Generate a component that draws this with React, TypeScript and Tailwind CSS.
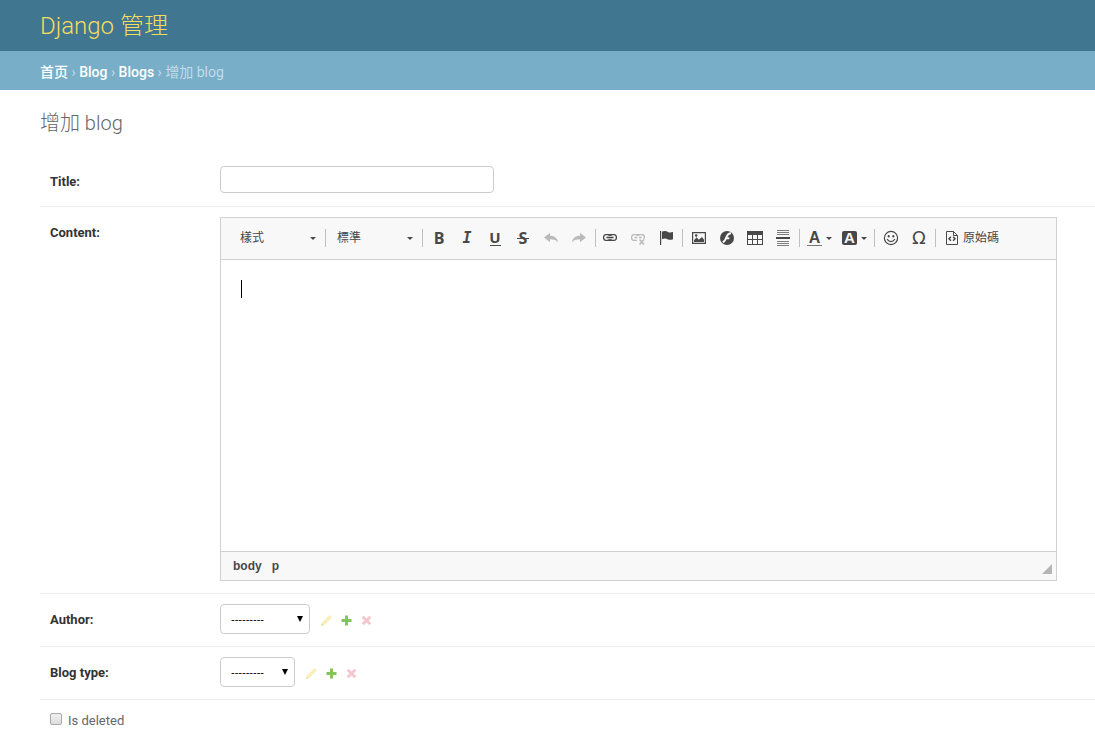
import type { ReactNode } from "react";

const sans = "font-[Roboto,'Noto_Sans_CJK_SC',sans-serif]";
const toolbarFont = "font-['Liberation_Sans','Noto_Sans_CJK_TC',sans-serif]";

function Arrow() {
  return (
    <svg viewBox="0 0 6 3" className="pointer-events-none h-[3px] w-1.5 shrink-0 fill-[#484848]">
      <path d="M0 0h6L3 3z" />
    </svg>
  );
}

function Combo({ label, text }: { label: string; text: string }) {
  return (
    <div className="relative flex w-24 items-center">
      <select
        aria-label={label}
        className={`h-7 w-full appearance-none bg-transparent pl-[11px] text-xs text-[#484848] outline-none ${toolbarFont}`}
      >
        <option>{text}</option>
      </select>
      <span className="pointer-events-none absolute right-[9px] flex">
        <Arrow />
      </span>
    </div>
  );
}

function Separator() {
  return <span className="h-[18px] w-px shrink-0 bg-[#c0c0c0]" />;
}

function Tool({ label, children, wide, disabled }: { label: string; children: ReactNode; wide?: boolean; disabled?: boolean }) {
  return (
    <button
      type="button"
      aria-label={label}
      title={label}
      disabled={disabled}
      className={`flex h-7 shrink-0 items-center justify-center text-[#484848] disabled:opacity-35 ${wide ? "w-[35px] gap-1" : "w-7"}`}
    >
      {children}
      {wide && <Arrow />}
    </button>
  );
}

function Icon({ children }: { children: ReactNode }) {
  return (
    <svg viewBox="0 0 16 16" className="size-4 shrink-0" fill="currentColor">
      {children}
    </svg>
  );
}

const letter = "flex h-4 justify-center font-['Open_Sans',sans-serif] text-base leading-4 font-bold";

function Toolbar() {
  return (
    <div className="flex h-[42px] items-center border-b border-[#d1d1d1] bg-[#f8f8f8] pb-px pl-2">
      <Combo label="樣式" text="樣式" />
      <Separator />
      <Combo label="格式" text="標準" />
      <Separator />
      <div className="flex px-0.5">
        <Tool label="粗體"><span className={letter}>B</span></Tool>
        <Tool label="斜體">
          <span className="font-['DejaVu_Sans_Mono',monospace] text-[15px] leading-4 font-bold italic">I</span>
        </Tool>
        <Tool label="底線">
          <span className="flex h-[15px] w-[11px] justify-center border-b border-[#484848] font-['Open_Sans',sans-serif] text-[15px] leading-3 font-bold">U</span>
        </Tool>
        <Tool label="刪除線">
          <span className={`${letter} relative w-3`}>
            S
            <span className="absolute inset-x-0 top-2 h-px bg-[#484848]" />
          </span>
        </Tool>
        <Tool label="復原" disabled>
          <Icon><path d="M1 7.500 7 2.800v3c4.500 0 7.500 2.200 8 6.800-1.500-2.400-4-3.300-8-3.300v3z" /></Icon>
        </Tool>
        <Tool label="取消復原" disabled>
          <Icon><path d="M15 7.500 9 2.800v3C4.500 5.800 1.500 8 1 12.600c1.500-2.400 4-3.300 8-3.300v3z" /></Icon>
        </Tool>
      </div>
      <Separator />
      <div className="flex pr-0.5">
        <Tool label="連結">
          <Icon>
            <g fill="none" stroke="currentColor" strokeWidth="1.300">
              <path d="M9 6V5.800Q9 4.600 7.500 4.600H4Q1.600 4.600 1.600 7.500T4 10.400h3.500Q9 10.400 9 9.200V9" />
              <path d="M7 6v-.2q0-1.200 1.500-1.200H12q2.400 0 2.400 2.900T12 10.400H8.500Q7 10.400 7 9.200V9" />
              <path d="M4.500 7.500h7" strokeWidth="1.600" />
            </g>
          </Icon>
        </Tool>
        <Tool label="取消連結" disabled>
          <Icon>
            <g fill="none" stroke="currentColor" strokeWidth="1.300">
              <path d="M9 6V5.800Q9 4.600 7.500 4.600H4Q1.600 4.600 1.600 7.500T4 10.400h3" />
              <path d="M7 6v-.2q0-1.200 1.500-1.200H12q2.400 0 2.400 2.400 0 1.200-.6 2" />
              <path d="M4.500 7.500h2.800m1.800 0h2.600" strokeWidth="1.500" />
              <path d="m9.500 9.500 4.500 5m0-5-4.500 5" strokeWidth="1.500" />
            </g>
          </Icon>
        </Tool>
        <Tool label="錨點">
          <Icon>
            <path d="M2 1h1.200v14H2zM4 1.500c3-1 4.500-.5 6 .4 1.500.8 3 .5 5 0v7.300c-2 .8-4 .8-5.500 0-1.500-.8-3.500-.8-5.500 0z" />
          </Icon>
        </Tool>
      </div>
      <Separator />
      <div className="flex px-0.5">
        <Tool label="圖片">
          <Icon>
            <path fillRule="evenodd" d="M1 2h14v12H1zm1.200 1.200v9.600h11.600V3.200zM3 12v-1.700l2.600-3 2.200 2.400L11 7l2 2.700V12zM5.200 4.200a1.300 1.300 0 1 1 0 2.600 1.300 1.300 0 0 1 0-2.600z" />
          </Icon>
        </Tool>
        <Tool label="Flash">
          <Icon>
            <circle cx="8" cy="8" r="7" />
            <path d="M12 3.200c-2.300 0-3.500 1.300-4.300 3.400C6.800 9.300 6 11.300 3.700 12.200M6.800 8.300h3.500" fill="none" stroke="#f8f8f8" strokeWidth="1.900" />
          </Icon>
        </Tool>
        <Tool label="表格">
          <Icon>
            <path fillRule="evenodd" d="M0 1h16v14H0zM1 5v4h4V5zm5 0v4h4V5zm5 0v4h4V5zM1 10v4h4v-4zm5 0v4h4v-4zm5 0v4h4v-4z" />
          </Icon>
        </Tool>
        <Tool label="水平線">
          <Icon>
            <path opacity=".7" d="M2 0h12v1H2zm0 2h12v1H2zm0 2h12v1H2zm0 7h12v1H2zm0 2h12v1H2zm0 2h12v1H2z" />
            <path d="M1 7h14v2H1z" />
          </Icon>
        </Tool>
      </div>
      <Separator />
      <div className="flex px-0.5">
        <Tool label="文字顏色" wide>
          <span className="flex h-4 w-[15px] justify-center border-b border-[#777] font-['Liberation_Sans',sans-serif] text-base leading-4 font-bold">A</span>
        </Tool>
        <Tool label="背景顏色" wide>
          <span className="flex h-[14px] w-[15px] items-center justify-center rounded-xs bg-[#484848] font-['Liberation_Sans',sans-serif] text-[15px] leading-[14px] font-bold text-[#f8f8f8]">A</span>
        </Tool>
      </div>
      <Separator />
      <div className="flex px-0.5">
        <Tool label="表情符號">
          <Icon>
            <circle cx="8" cy="8" r="6.600" fill="none" stroke="currentColor" strokeWidth="1.200" />
            <ellipse cx="5.700" cy="6.200" rx="1" ry="1.300" />
            <ellipse cx="10.300" cy="6.200" rx="1" ry="1.300" />
            <path d="M4 9.200q4 4.800 8 0" fill="none" stroke="currentColor" strokeWidth="1.200" />
          </Icon>
        </Tool>
        <Tool label="特殊符號">
          <span className="font-['DejaVu_Sans',sans-serif] text-lg leading-4">Ω</span>
        </Tool>
      </div>
      <Separator />
      <button type="button" className={`flex h-7 shrink-0 items-center gap-[3px] pl-2 text-xs text-[#484848] ${toolbarFont}`}>
        <Icon>
          <g fill="none" stroke="currentColor" strokeWidth="1">
            <path d="M2.500 1.500h7l4 4v9h-11z" />
            <path d="M9.500 1.500v4h4" />
            <path d="M6.900 6.800 5 8.800l1.900 2M9.100 6.800l1.900 2-1.900 2" strokeWidth="1.500" />
          </g>
        </Icon>
        原始碼
      </button>
    </div>
  );
}

function Editor() {
  return (
    <div className="w-[837px] shrink-0 border border-[#d1d1d1]">
      <Toolbar />
      <div role="textbox" aria-multiline="true" aria-labelledby="content-label" tabIndex={0} className="h-[291px] bg-white p-5 outline-none">
        <span className="block h-[18px] w-px bg-black" />
      </div>
      <div className="flex h-[29px] items-center justify-between border-t border-[#d1d1d1] bg-[#f8f8f8] pr-1 pl-3">
        <div className="flex gap-2.5 font-['Liberation_Sans',sans-serif] text-xs font-bold text-[#484848]">
          <span>body</span>
          <span>p</span>
        </div>
        <svg viewBox="0 0 10 10" className="mt-1.5 size-2.5 fill-[#b5b5b5]">
          <path d="M10 0v10H0z" />
        </svg>
      </div>
    </div>
  );
}

function RelatedLinks({ name }: { name: string }) {
  return (
    <div className="flex items-center gap-[7px] pt-0.5 pl-2.5">
      <button type="button" disabled aria-label={`Change ${name}`}>
        <svg viewBox="0 0 13 13" className="size-[13px]">
          <path d="m1 12 1-3.500L9.500 1 12 3.500 4.500 11z" fill="#f9efba" />
          <path d="m1 12 .7-2.500L3.500 11.300z" fill="#e5dca9" />
        </svg>
      </button>
      <button type="button" aria-label={`Add ${name}`}>
        <svg viewBox="0 0 13 13" className="size-[13px] fill-[#85c45a]">
          <path d="M5 1.500h3V5h3.500v3H8v3.500H5V8H1.500V5H5z" />
        </svg>
      </button>
      <button type="button" disabled aria-label={`Delete ${name}`}>
        <svg viewBox="0 0 13 13" className="size-[13px] fill-[#f4c6cd]">
          <path d="M3.700 1.700 6.500 4.500l2.800-2.800 2 2L8.500 6.500l2.800 2.800-2 2-2.800-2.800-2.800 2.800-2-2 2.800-2.800-2.800-2.800z" />
        </svg>
      </button>
    </div>
  );
}

function SelectRow({ id, label, width }: { id: string; label: string; width: string }) {
  return (
    <div className="flex border-b border-[#eee] px-2.5 pt-2.5 pb-3">
      <label htmlFor={id} className="w-[170px] shrink-0 pt-2 text-[13px] leading-4 font-bold text-[#333]">{label}</label>
      <div className={`relative flex ${width}`}>
        <select
          id={id}
          className="h-[30px] w-full appearance-none rounded-[4px] border border-[#ccc] bg-white pl-2.5 font-['Liberation_Sans',sans-serif] text-[11px] text-black"
        >
          <option>---------</option>
        </select>
        <svg viewBox="0 0 6 6" className="pointer-events-none absolute top-3 right-[7px] size-1.5">
          <path d="M0 0h6L3 6z" />
        </svg>
      </div>
      <RelatedLinks name={label.replace(":", "").toLowerCase()} />
    </div>
  );
}

export default function App() {
  const crumb = "font-medium text-white";
  return (
    <div className={`min-h-screen bg-white text-[#333] ${sans}`}>
      <header className="flex h-[51px] items-center bg-[#417690] px-10">
        <a href="#" className="text-2xl font-light text-[#f5dd5d]">Django 管理</a>
      </header>
      <nav aria-label="Breadcrumb" className="bg-[#79aec8] px-10 pt-[11px] pb-2 text-sm leading-5 text-[#c4dce8]">
        <a href="#" className={crumb}>首页</a> › <a href="#" className={crumb}>Blog</a> › <a href="#" className={crumb}>Blogs</a> › 增加 blog
      </nav>
      <main className="pt-5 pl-10">
        <h1 className="text-xl leading-[26px] font-light text-[#666]">增加 blog</h1>
        <form className="pt-5">
          <div className="flex border-b border-[#eee] px-2.5 pt-2.5 pb-[13px]">
            <label htmlFor="title" className="w-[170px] shrink-0 pt-2 text-[13px] leading-4 font-bold">Title:</label>
            <input id="title" type="text" className="h-[27px] w-[274px] rounded-[4px] border border-[#ccc] px-1.5 text-[13px]" />
          </div>
          <div className="flex border-b border-[#eee] px-2.5 pt-2.5 pb-3">
            <span id="content-label" className="w-[170px] shrink-0 pt-2 text-[13px] leading-4 font-bold">Content:</span>
            <Editor />
          </div>
          <SelectRow id="author" label="Author:" width="w-[90px]" />
          <SelectRow id="blog-type" label="Blog type:" width="w-[75px]" />
          <div className="flex items-start gap-1.5 px-2.5 pt-3">
            <input
              id="is-deleted"
              type="checkbox"
              className="mt-px size-3 appearance-none rounded-[2px] border border-[#a9a9a9] bg-linear-to-b from-[#f0f0f0] to-[#dedede] checked:bg-[#79aec8]"
            />
            <label htmlFor="is-deleted" className="text-[13px] leading-[18px] text-[#666]">Is deleted</label>
          </div>
        </form>
      </main>
    </div>
  );
}
